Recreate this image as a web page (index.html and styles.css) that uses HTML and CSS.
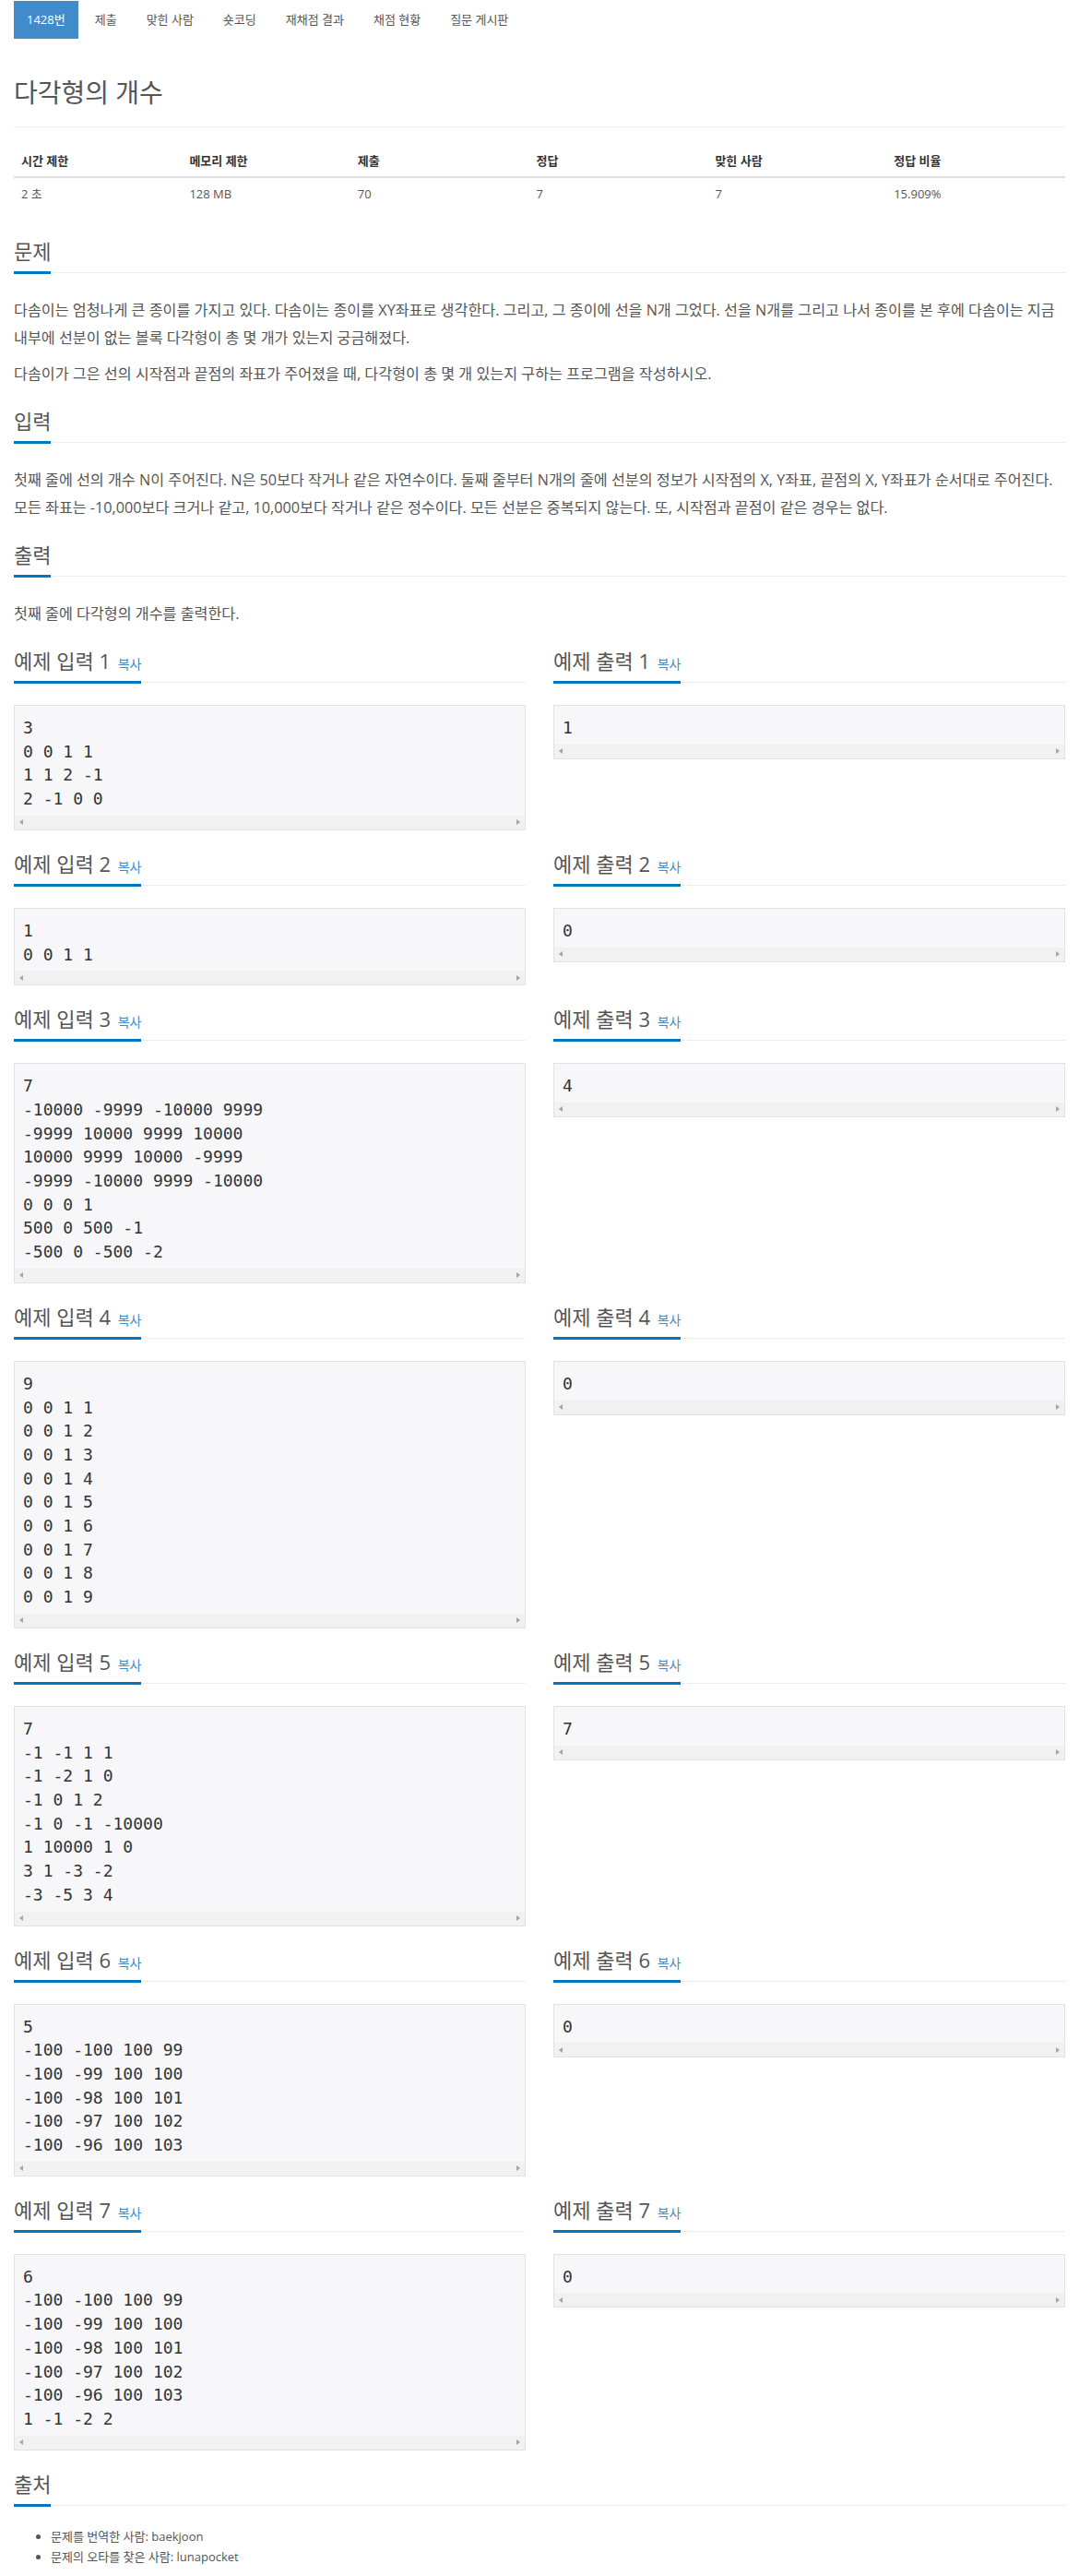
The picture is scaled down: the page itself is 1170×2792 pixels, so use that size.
FILE: index.html
```html
<!DOCTYPE html>
<html lang="ko">
<head>
<meta charset="utf-8">
<title>다각형의 개수</title>
<link rel="stylesheet" href="styles.css">
</head>
<body>
<div class="page">
  <ul class="tabs">
    <li class="tab active">1428번</li>
    <li class="tab">제출</li>
    <li class="tab">맞힌 사람</li>
    <li class="tab">숏코딩</li>
    <li class="tab">재채점 결과</li>
    <li class="tab">채점 현황</li>
    <li class="tab">질문 게시판</li>
  </ul>

  <h1 class="title">다각형의 개수</h1>
  <hr class="rule">

  <table class="info">
    <thead>
      <tr><th class="w16">시간 제한</th><th class="w16">메모리 제한</th><th class="w17">제출</th><th class="w17">정답</th><th class="w17">맞힌 사람</th><th class="w17">정답 비율</th></tr>
    </thead>
    <tbody>
      <tr><td>2 초</td><td>128 MB</td><td>70</td><td>7</td><td>7</td><td>15.909%</td></tr>
    </tbody>
  </table>

  <section class="section">
    <div class="headline"><h2>문제</h2></div>
    <div class="text">
      <p>다솜이는 엄청나게 큰 종이를 가지고 있다. 다솜이는 종이를 XY좌표로 생각한다. 그리고, 그 종이에 선을 N개 그었다. 선을 N개를 그리고 나서 종이를 본 후에 다솜이는 지금 내부에 선분이 없는 볼록 다각형이 총 몇 개가 있는지 궁금해졌다.</p>
      <p>다솜이가 그은 선의 시작점과 끝점의 좌표가 주어졌을 때, 다각형이 총 몇 개 있는지 구하는 프로그램을 작성하시오.</p>
    </div>
  </section>

  <section class="section">
    <div class="headline"><h2>입력</h2></div>
    <div class="text">
      <p>첫째 줄에 선의 개수 N이 주어진다. N은 50보다 작거나 같은 자연수이다. 둘째 줄부터 N개의 줄에 선분의 정보가 시작점의 X, Y좌표, 끝점의 X, Y좌표가 순서대로 주어진다. 모든 좌표는 -10,000보다 크거나 같고, 10,000보다 작거나 같은 정수이다. 모든 선분은 중복되지 않는다. 또, 시작점과 끝점이 같은 경우는 없다.</p>
    </div>
  </section>

  <section class="section">
    <div class="headline"><h2>출력</h2></div>
    <div class="text">
      <p>첫째 줄에 다각형의 개수를 출력한다.</p>
    </div>
  </section>

  <div class="sample-row">
    <div class="sample">
      <div class="headline"><h2>예제 입력 1 <span class="copy">복사</span></h2></div>
      <div class="codebox"><pre>3
0 0 1 1
1 1 2 -1
2 -1 0 0</pre><div class="hscroll"><span class="arr-l"></span><span class="arr-r"></span></div></div>
    </div>
    <div class="sample">
      <div class="headline"><h2>예제 출력 1 <span class="copy">복사</span></h2></div>
      <div class="codebox"><pre>1</pre><div class="hscroll"><span class="arr-l"></span><span class="arr-r"></span></div></div>
    </div>
  </div>

  <div class="sample-row">
    <div class="sample">
      <div class="headline"><h2>예제 입력 2 <span class="copy">복사</span></h2></div>
      <div class="codebox"><pre>1
0 0 1 1</pre><div class="hscroll"><span class="arr-l"></span><span class="arr-r"></span></div></div>
    </div>
    <div class="sample">
      <div class="headline"><h2>예제 출력 2 <span class="copy">복사</span></h2></div>
      <div class="codebox"><pre>0</pre><div class="hscroll"><span class="arr-l"></span><span class="arr-r"></span></div></div>
    </div>
  </div>

  <div class="sample-row">
    <div class="sample">
      <div class="headline"><h2>예제 입력 3 <span class="copy">복사</span></h2></div>
      <div class="codebox"><pre>7
-10000 -9999 -10000 9999
-9999 10000 9999 10000
10000 9999 10000 -9999
-9999 -10000 9999 -10000
0 0 0 1
500 0 500 -1
-500 0 -500 -2</pre><div class="hscroll"><span class="arr-l"></span><span class="arr-r"></span></div></div>
    </div>
    <div class="sample">
      <div class="headline"><h2>예제 출력 3 <span class="copy">복사</span></h2></div>
      <div class="codebox"><pre>4</pre><div class="hscroll"><span class="arr-l"></span><span class="arr-r"></span></div></div>
    </div>
  </div>

  <div class="sample-row">
    <div class="sample">
      <div class="headline"><h2>예제 입력 4 <span class="copy">복사</span></h2></div>
      <div class="codebox"><pre>9
0 0 1 1
0 0 1 2
0 0 1 3
0 0 1 4
0 0 1 5
0 0 1 6
0 0 1 7
0 0 1 8
0 0 1 9</pre><div class="hscroll"><span class="arr-l"></span><span class="arr-r"></span></div></div>
    </div>
    <div class="sample">
      <div class="headline"><h2>예제 출력 4 <span class="copy">복사</span></h2></div>
      <div class="codebox"><pre>0</pre><div class="hscroll"><span class="arr-l"></span><span class="arr-r"></span></div></div>
    </div>
  </div>

  <div class="sample-row">
    <div class="sample">
      <div class="headline"><h2>예제 입력 5 <span class="copy">복사</span></h2></div>
      <div class="codebox"><pre>7
-1 -1 1 1
-1 -2 1 0
-1 0 1 2
-1 0 -1 -10000
1 10000 1 0
3 1 -3 -2
-3 -5 3 4</pre><div class="hscroll"><span class="arr-l"></span><span class="arr-r"></span></div></div>
    </div>
    <div class="sample">
      <div class="headline"><h2>예제 출력 5 <span class="copy">복사</span></h2></div>
      <div class="codebox"><pre>7</pre><div class="hscroll"><span class="arr-l"></span><span class="arr-r"></span></div></div>
    </div>
  </div>

  <div class="sample-row">
    <div class="sample">
      <div class="headline"><h2>예제 입력 6 <span class="copy">복사</span></h2></div>
      <div class="codebox"><pre>5
-100 -100 100 99
-100 -99 100 100
-100 -98 100 101
-100 -97 100 102
-100 -96 100 103</pre><div class="hscroll"><span class="arr-l"></span><span class="arr-r"></span></div></div>
    </div>
    <div class="sample">
      <div class="headline"><h2>예제 출력 6 <span class="copy">복사</span></h2></div>
      <div class="codebox"><pre>0</pre><div class="hscroll"><span class="arr-l"></span><span class="arr-r"></span></div></div>
    </div>
  </div>

  <div class="sample-row">
    <div class="sample">
      <div class="headline"><h2>예제 입력 7 <span class="copy">복사</span></h2></div>
      <div class="codebox"><pre>6
-100 -100 100 99
-100 -99 100 100
-100 -98 100 101
-100 -97 100 102
-100 -96 100 103
1 -1 -2 2</pre><div class="hscroll"><span class="arr-l"></span><span class="arr-r"></span></div></div>
    </div>
    <div class="sample">
      <div class="headline"><h2>예제 출력 7 <span class="copy">복사</span></h2></div>
      <div class="codebox"><pre>0</pre><div class="hscroll"><span class="arr-l"></span><span class="arr-r"></span></div></div>
    </div>
  </div>

  <section class="section source">
    <div class="headline"><h2>출처</h2></div>
    <ul class="credits">
      <li>문제를 번역한 사람: baekjoon</li>
      <li>문제의 오타를 찾은 사람: lunapocket</li>
    </ul>
  </section>
</div>
</body>
</html>
```

FILE: styles.css
```css
* { box-sizing: border-box; }

html, body {
  margin: 0;
  padding: 0;
  background: #fff;
}

body {
  font-family: "Open Sans", "Noto Sans CJK KR", sans-serif;
  color: #555;
  font-size: 16px;
}

.page {
  padding: 1px 15px 0;
}

/* tabs */
.tabs {
  list-style: none;
  margin: 0;
  padding: 0;
  display: flex;
  gap: 4px;
}
.tab {
  height: 41px;
  line-height: 41px;
  padding: 0 14px;
  font-size: 13px;
  color: #555;
}
.tab.active {
  background: #428bca;
  color: #fff;
}

/* title */
.title {
  margin: 38px 0 17px;
  font-size: 28px;
  line-height: 40px;
  font-weight: 400;
  color: #555;
}
.rule {
  border: 0;
  border-top: 1px solid #eee;
  margin: 0 0 19px;
  height: 0;
}

/* info table */
.info {
  width: 100%;
  border-collapse: collapse;
  font-size: 13px;
  margin-bottom: 30px;
}
.info th, .info td {
  text-align: left;
  padding: 8px;
  line-height: 18px;
}
.info th {
  font-weight: 700;
  color: #333;
  border-bottom: 2px solid #ddd;
}
.info td {
  color: #555;
}
.w16 { width: 16%; }
.w17 { width: 17%; }

/* headlines */
.headline {
  display: flex;
  border-bottom: 1px dotted #ddd;
}
.headline h2 {
  margin: 0 0 -2px;
  padding: 0 0 7px;
  font-size: 22px;
  line-height: 30px;
  font-weight: 400;
  color: #555;
  border-bottom: 3px solid #0076c0;
}
.copy {
  font-size: 14px;
  line-height: 1;
  color: #428bca;
  margin-left: 2px;
}

/* text sections */
.section {
  margin-bottom: 21px;
}
.text {
  margin-top: 25px;
}
.text p {
  margin: 0;
  font-size: 16.2px;
  line-height: 30px;
}
.text p + p {
  margin-top: 9px;
}

/* samples */
.sample-row {
  display: grid;
  grid-template-columns: 1fr 1fr;
  column-gap: 30px;
  margin-bottom: 21px;
  align-items: start;
}
.codebox {
  margin-top: 24px;
  border: 1px solid #e1e1e8;
  background: #f7f7f9;
}
.codebox pre {
  margin: 0;
  padding: 11px 9px 5px;
  font-family: "DejaVu Sans Mono", monospace;
  font-size: 18px;
  line-height: 25.71px;
  color: #333;
  white-space: pre;
  overflow: hidden;
}
.hscroll {
  height: 15px;
  background: #f1f1f1;
  display: flex;
  justify-content: space-between;
  align-items: center;
  padding: 0 5px;
}
.arr-l, .arr-r {
  width: 0;
  height: 0;
  border-top: 3.5px solid transparent;
  border-bottom: 3.5px solid transparent;
}
.arr-l { border-right: 4px solid #a3a3a3; }
.arr-r { border-left: 4px solid #a3a3a3; }

/* source */
.credits {
  margin: 22px 0 0;
  padding-left: 40px;
  font-size: 13px;
  line-height: 22px;
  color: #555;
}
```
